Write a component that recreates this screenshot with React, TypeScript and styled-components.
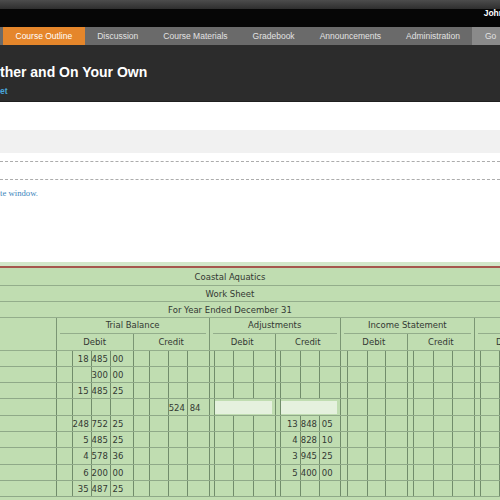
import React from 'react';
import styled, { createGlobalStyle } from 'styled-components';

const GlobalStyle = createGlobalStyle`
  html, body { margin: 0; padding: 0; background: #ffffff; }
  body {
    width: 500px;
    height: 500px;
    overflow: hidden;
    font-family: "Liberation Sans", Arial, sans-serif;
  }
`;

const Page = styled.div`
  width: 500px;
  display: flex;
  flex-direction: column;
`;

const TopStrip = styled.div`
  height: 9px;
  background: linear-gradient(#4c4c4c, #2e2e2e);
`;

const UserBar = styled.div`
  height: 18px;
  background: #060606;
  display: flex;
  justify-content: flex-end;
  overflow: hidden;
`;

const UserName = styled.span`
  color: #ffffff;
  font-size: 8.5px;
  font-weight: bold;
  line-height: 9px;
  white-space: nowrap;
  margin-right: -4px;
`;

const NavBar = styled.nav`
  height: 18px;
  background: #6a6a6a;
  display: flex;
  padding-left: 3px;
  overflow: hidden;
`;

const Tab = styled.div<{ $active?: boolean; $muted?: boolean }>`
  padding: 0 12.5px;
  line-height: 18px;
  font-size: 8.5px;
  white-space: nowrap;
  color: ${(p) => (p.$active ? '#ffffff' : '#e2e2e2')};
  background: ${(p) => (p.$active ? '#e5862b' : p.$muted ? '#8a8a8a' : 'transparent')};
  flex: ${(p) => (p.$muted ? '1' : 'none')};
`;

const Header = styled.header`
  height: 57px;
  box-sizing: border-box;
  background: #2c2c2c;
  border-bottom: 1px solid #1f1f1f;
  padding-top: 18px;
  display: flex;
  flex-direction: column;
`;

const Title = styled.h1`
  margin: 0;
  color: #ffffff;
  font-size: 14px;
  font-weight: bold;
  line-height: 18px;
  white-space: nowrap;
`;

const SubLink = styled.a`
  margin-top: 4px;
  color: #4aa6da;
  font-size: 8.5px;
  font-weight: bold;
  line-height: 12px;
  text-decoration: none;
`;

const Content = styled.main`
  display: flex;
  flex-direction: column;
  padding-top: 28px;
`;

const GrayBand = styled.div`
  height: 23px;
  background: #f1f1f1;
`;

const DashedBox = styled.div`
  margin-top: 8px;
  height: 19px;
  box-sizing: border-box;
  border-top: 1px dashed #acacac;
  border-bottom: 1px dashed #acacac;
`;

const Note = styled.p`
  margin: 7px 0 0;
  font-family: "Liberation Serif", "Times New Roman", serif;
  font-size: 8.7px;
  line-height: 12px;
  color: #3d87bd;
`;

const Sheet = styled.section`
  margin-top: 63px;
  background: #c0ddb1;
  overflow: hidden;
  height: 238px;
`;

const SheetTop = styled.div`
  height: 4px;
  background: #d2e7c9;
  border-bottom: 2px solid #a5574d;
`;

const Table = styled.table`
  width: 608px;
  table-layout: fixed;
  border-collapse: collapse;
  font-family: "DejaVu Sans", Verdana, sans-serif;
  font-size: 8.5px;
  color: #333833;
`;

const Row = styled.tr<{ $h?: number; $last?: boolean }>`
  height: ${(p) => p.$h ?? 16.3}px;
  ${(p) => (p.$last ? 'border-bottom: 1px solid #3a3a3a;' : '')}
`;

const TitleCell = styled.td`
  text-align: center;
  padding: 2px 148px 0 0;
  border-bottom: 1px solid #93ad8b;
  white-space: nowrap;
`;

const BlankHead = styled.td`
  border-bottom: 1px solid #93ad8b;
  padding: 0;
`;

const SectionCell = styled.td`
  border-left: 1px solid #7b9674;
  padding: 0;
  vertical-align: bottom;
  white-space: nowrap;
`;

const SectionLabel = styled.div`
  margin: 0 3px;
  text-align: center;
  line-height: 15px;
  border-bottom: 1px solid #93ad8b;
`;

const SubHead = styled.td`
  border-left: 1px solid #7b9674;
  border-bottom: 1px solid #93ad8b;
  text-align: center;
  padding: 1px 0 0;
  white-space: nowrap;
`;

const Cell = styled.td<{ $align?: 'left' | 'right' }>`
  border-left: 1px solid #718c6b;
  border-bottom: 1px solid #8fa988;
  padding: ${(p) => (p.$align === 'left' ? '1px 0 0 2px' : '1px 2px 0 0')};
  text-align: ${(p) => p.$align ?? 'right'};
  white-space: nowrap;
  overflow: hidden;
`;

const AccountCell = styled.td`
  border-bottom: 1px solid #8fa988;
  padding: 0;
`;

const FieldCell = styled.td`
  border-left: 1px solid #718c6b;
  border-bottom: 1px solid #8fa988;
  padding: 1px 3px 1px 0;
`;

const Field = styled.div`
  height: 13px;
  background: #e5f1de;
`;

const colWidths = [
  56,
  16, 19, 19, 23,
  16, 19, 19, 22,
  5, 19, 20, 22,
  5, 20, 19, 21,
  7, 20, 18, 22,
  6, 20, 19, 22,
  6, 19, 19, 22,
  6, 20, 19, 22,
];

type Money = [string, string, string, string];
const empty: Money = ['', '', '', ''];

type DataRow = {
  tbd?: Money;
  tbc?: Money;
  adjc?: Money;
  inputs?: boolean;
};

const rows: DataRow[] = [
  { tbd: ['', '18', '485', '00'] },
  { tbd: ['', '', '300', '00'] },
  { tbd: ['', '15', '485', '25'] },
  { tbc: ['', '', '524', '84'], inputs: true },
  { tbd: ['', '248', '752', '25'], adjc: ['', '13', '848', '05'] },
  { tbd: ['', '5', '485', '25'], adjc: ['', '4', '828', '10'] },
  { tbd: ['', '4', '578', '36'], adjc: ['', '3', '945', '25'] },
  { tbd: ['', '6', '200', '00'], adjc: ['', '5', '400', '00'] },
  { tbd: ['', '35', '487', '25'] },
];

const MoneyCells: React.FC<{ v?: Money }> = ({ v = empty }) => (
  <>
    <Cell>{v[0]}</Cell>
    <Cell>{v[1]}</Cell>
    <Cell>{v[2]}</Cell>
    <Cell $align="left">{v[3]}</Cell>
  </>
);

const InputCells: React.FC = () => (
  <>
    <Cell />
    <FieldCell colSpan={3}>
      <Field />
    </FieldCell>
  </>
);

const sections = ['Trial Balance', 'Adjustments', 'Income Statement', '\u00a0'];
const subHeads = ['Debit', 'Credit', 'Debit', 'Credit', 'Debit', 'Credit', 'Debit', ''];

export default function App() {
  return (
    <>
      <GlobalStyle />
      <Page>
        <TopStrip />
        <UserBar>
          <UserName>John</UserName>
        </UserBar>
        <NavBar>
          <Tab $active>Course Outline</Tab>
          <Tab>Discussion</Tab>
          <Tab>Course Materials</Tab>
          <Tab>Gradebook</Tab>
          <Tab>Announcements</Tab>
          <Tab>Administration</Tab>
          <Tab $muted>Go</Tab>
        </NavBar>
        <Header>
          <Title>ther and On Your Own</Title>
          <SubLink href="#">et</SubLink>
        </Header>
        <Content>
          <GrayBand />
          <DashedBox />
          <Note>te window.</Note>
          <Sheet>
            <SheetTop />
            <Table>
              <colgroup>
                {colWidths.map((w, i) => (
                  <col key={i} style={{ width: w }} />
                ))}
              </colgroup>
              <tbody>
                <Row $h={17}>
                  <TitleCell colSpan={33}>Coastal Aquatics</TitleCell>
                </Row>
                <Row $h={16}>
                  <TitleCell colSpan={33}>Work Sheet</TitleCell>
                </Row>
                <Row $h={16}>
                  <TitleCell colSpan={33}>For Year Ended December 31</TitleCell>
                </Row>
                <Row $h={17}>
                  <BlankHead rowSpan={2} />
                  {sections.map((s, i) => (
                    <SectionCell key={i} colSpan={8}>
                      <SectionLabel>{s}</SectionLabel>
                    </SectionCell>
                  ))}
                </Row>
                <Row $h={16}>
                  {subHeads.map((s, i) => (
                    <SubHead key={i} colSpan={4}>
                      {s}
                    </SubHead>
                  ))}
                </Row>
                {rows.map((r, i) => (
                  <Row key={i} $last={i === rows.length - 1}>
                    <AccountCell />
                    <MoneyCells v={r.tbd} />
                    <MoneyCells v={r.tbc} />
                    {r.inputs ? <InputCells /> : <MoneyCells />}
                    {r.inputs ? <InputCells /> : <MoneyCells v={r.adjc} />}
                    <MoneyCells />
                    <MoneyCells />
                    <MoneyCells />
                    <MoneyCells />
                  </Row>
                ))}
              </tbody>
            </Table>
          </Sheet>
        </Content>
      </Page>
    </>
  );
}
